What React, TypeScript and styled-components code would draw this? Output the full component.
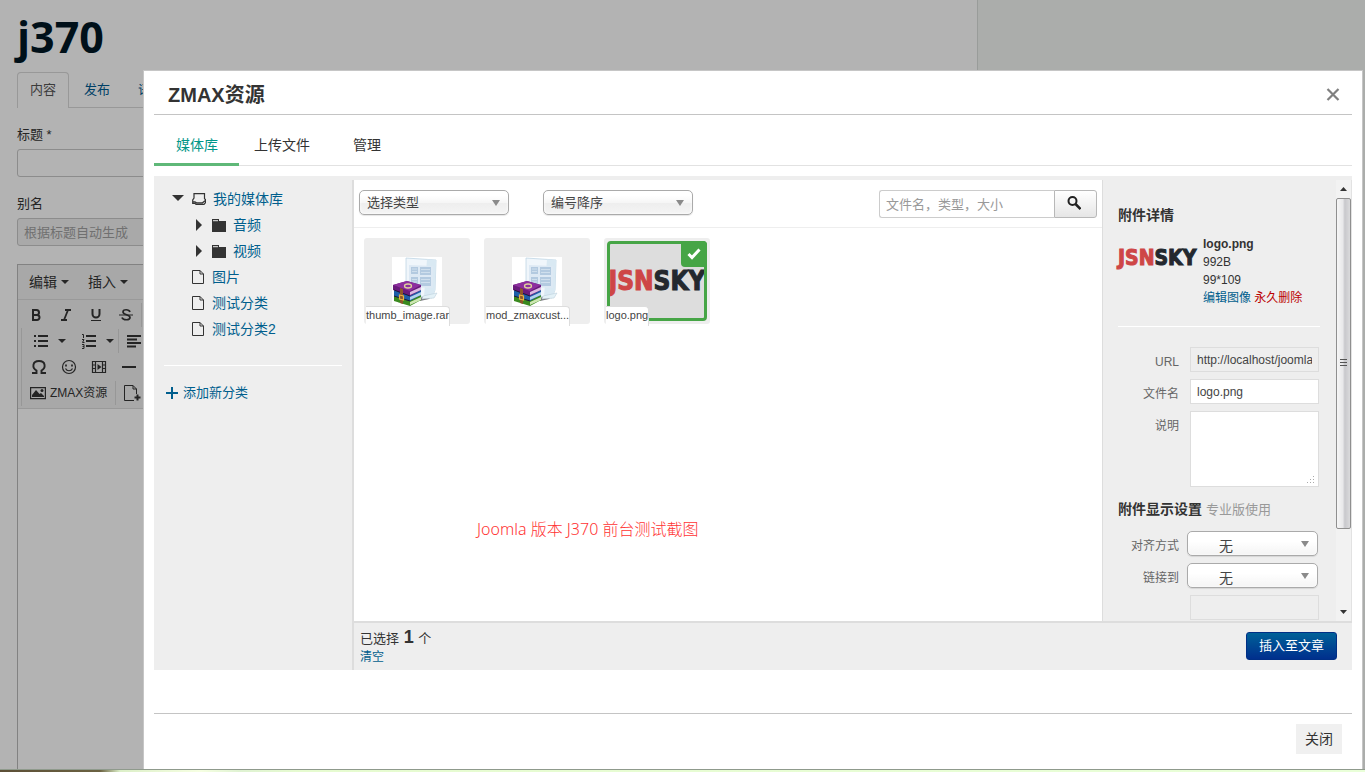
import React from "react";
import styled, { createGlobalStyle, css } from "styled-components";

const GlobalStyle = createGlobalStyle`
  * { box-sizing: border-box; }
  html, body { margin: 0; padding: 0; }
  body {
    font-family: "Liberation Sans", "Noto Sans CJK SC", sans-serif;
    font-size: 13px;
    line-height: 18px;
    color: #333;
    overflow: hidden;
  }
  button, input, select, textarea { font: inherit; color: inherit; margin: 0; }
  button { cursor: pointer; }
  a { text-decoration: none; }
  svg { display: block; flex: none; }
`;

/* ---------- dimmed page behind the dialog ---------- */

const Page = styled.div`
  display: flex;
  height: 100vh;
  background: #abadab;
`;
const Article = styled.main`
  flex: 1;
  display: flex;
  flex-direction: column;
  padding: 12px 20px 0 17px;
  background: #b3b3b3;
  border-right: 1px solid #999c9a;
  color: #242424;
`;
const Margin = styled.aside`
  width: 387px;
`;
const SiteTitle = styled.h1`
  margin: 0 0 10px;
  font: 700 43px/50px "Open Sans", sans-serif;
  color: #001019;
`;
const PageTabs = styled.nav`
  display: flex;
  gap: 2px;
  height: 36px;
  border-bottom: 1px solid #989898;
`;
const PageTab = styled.a<{ $active?: boolean }>`
  height: 36px;
  padding: 0 13px;
  line-height: 36px;
  color: #004066;
  ${(p) =>
    p.$active &&
    css`
      padding: 0 12px;
      line-height: 34px;
      color: #3b3b3b;
      background: #b3b3b3;
      border: 1px solid #989898;
      border-bottom: 0;
      border-radius: 4px 4px 0 0;
    `}
`;
const PageLabel = styled.label`
  margin-top: 18px;
  margin-bottom: 5px;
`;
const PageInput = styled.input`
  height: 28px;
  padding: 0 6px;
  background: #b3b3b3;
  border: 1px solid #8c8c8c;
  border-radius: 3px;
  &::placeholder { color: #707070; opacity: 1; }
  &:read-only { background: #a9a9a9; }
`;
const Editor = styled.section`
  flex: 1;
  margin-top: 18px;
  border: 1px solid #828282;
  border-bottom: 0;
`;
const EditorMenu = styled.div`
  display: flex;
  gap: 19px;
  height: 35px;
  padding: 0 11px;
  background: #a8a8a8;
  border-bottom: 1px solid #999;
`;
const MenuButton = styled.button`
  display: flex;
  align-items: center;
  gap: 4px;
  padding: 0;
  border: 0;
  background: none;
  font-size: 14px;
`;
const EditorTools = styled.div`
  height: 109px;
  padding: 2px 3px;
  background: #a8a8a8;
  border-bottom: 1px solid #999;
`;
const ToolRow = styled.div<{ $ruled?: boolean; $inset?: number }>`
  display: flex;
  align-items: center;
  height: 26px;
  padding-left: ${(p) => p.$inset ?? 0}px;
  border-left: ${(p) => (p.$ruled ? "1px solid #979797" : "0")};
`;
const ToolButton = styled.button<{ $wide?: boolean }>`
  display: flex;
  align-items: center;
  justify-content: center;
  gap: 4px;
  flex: none;
  width: ${(p) => (p.$wide ? "auto" : "30px")};
  height: 24px;
  padding: ${(p) => (p.$wide ? "0 8px" : "0 2px")};
  border: 0;
  background: none;
  font-size: 12px;
  white-space: nowrap;
`;
const ListButton = styled(ToolButton)`
  width: 48px;
  gap: 10px;
  justify-content: flex-start;
  padding: 0 0 0 12px;
`;
const ToolRule = styled.span`
  flex: none;
  width: 1px;
  height: 24px;
  background: #979797;
`;
const Caret = styled.span`
  border: 4px solid transparent;
  border-top-color: #262626;
  border-bottom: 0;
`;
const DesktopEdge = styled.div`
  position: fixed;
  left: 0;
  right: 0;
  bottom: 0;
  height: 3px;
  z-index: 3;
  border-top: 1px solid #8f9a8c;
  background: linear-gradient(90deg, #5c4f36 0, #6b6242 100px, #dcefc8 120px, #f6ffe2 200px, #dff2d2 240px, #e6fbd0 300px, #e9ffd8);
`;

/* ---------- dialog ---------- */

const Dialog = styled.section`
  position: fixed;
  z-index: 2;
  inset: 70px 2px 3px 143px;
  display: flex;
  flex-direction: column;
  padding: 0 10px;
  background: #fff;
  border: 1px solid #c6c6c6;
  border-bottom: 0;
`;
const DialogHead = styled.header`
  display: flex;
  justify-content: space-between;
  align-items: center;
  height: 44px;
  padding: 4px 12px 0 14px;
  border-bottom: 1px solid #c4c4c4;
`;
const DialogTitle = styled.h2`
  margin: 0;
  font-size: 20px;
  line-height: 28px;
`;
const CloseIcon = styled.button`
  padding: 0;
  border: 0;
  background: none;
  color: #808080;
`;
const Tabs = styled.nav`
  display: flex;
  height: 51px;
  border-bottom: 1px solid #e2e2e2;
`;
const Tab = styled.a<{ $active?: boolean }>`
  height: 51px;
  padding: 8px 28px 0 15px;
  font-size: 14px;
  line-height: 44px;
  color: #333;
  ${(p) =>
    p.$active &&
    css`
      padding: 8px 21px 0 22px;
      color: #009688;
      border-bottom: 3px solid #5fb878;
    `}
`;
const Library = styled.div`
  flex: 1;
  min-height: 0;
  display: flex;
  margin: 10px 0 43px;
  padding-top: 4px;
  background: #eee;
`;
const Sidebar = styled.aside`
  width: 198px;
  padding: 6px 10px;
`;
const Tree = styled.ul`
  margin: 0;
  padding: 0 0 23px;
  list-style: none;
  border-bottom: 1px solid #fff;
`;
const TreeRow = styled.li<{ $indent: number }>`
  display: flex;
  align-items: center;
  height: 26px;
  padding-left: ${(p) => p.$indent}px;
  gap: 7px;
  color: #333;
  font-size: 14px;
`;
const BlueLink = styled.a`
  color: #005e8d;
`;
const AddLink = styled(BlueLink)`
  display: flex;
  align-items: center;
  gap: 5px;
  margin: 18px 0 0 2px;
`;
const Content = styled.div`
  flex: 1;
  min-width: 0;
  display: flex;
  flex-direction: column;
  border-left: 2px solid #ddd;
`;
const Workspace = styled.div`
  flex: 1;
  min-height: 0;
  display: flex;
`;
const Browser = styled.div`
  flex: 1;
  min-width: 0;
  display: flex;
  flex-direction: column;
  background: #fff;
`;
const Toolbar = styled.div`
  display: flex;
  align-items: flex-start;
  gap: 34px;
  height: 48px;
  padding: 10px 5px;
  border-bottom: 1px solid #eee;
`;
const SelectBox = styled.span<{ $width: number }>`
  position: relative;
  flex: none;
  width: ${(p) => p.$width}px;
  color: #8a8a8a;
  svg { position: absolute; right: 9px; top: 10px; }
`;
const Select = styled.select<{ $inset?: number }>`
  appearance: none;
  display: block;
  width: 100%;
  height: 25px;
  padding: 0 20px 0 ${(p) => p.$inset ?? 7}px;
  color: #444;
  border: 1px solid #aaa;
  border-radius: 5px;
  background: linear-gradient(#fff 20%, #f6f6f6 50%, #eee 52%, #f4f4f4 100%);
  box-shadow: 0 0 3px #fff inset, 0 1px 1px rgba(0, 0, 0, 0.1);
`;
const PlainSelect = styled(Select)`
  padding-top: 5px;
  font-size: 14px;
  background: linear-gradient(#fff, #fff 40%, #f4f4f4);
`;
const Search = styled.form`
  display: flex;
  margin-left: auto;
`;
const SearchInput = styled.input`
  width: 175px;
  height: 28px;
  padding: 0 6px;
  border: 1px solid #ccc;
  border-right: 0;
  border-radius: 3px 0 0 3px;
  &::placeholder { color: #999; opacity: 1; }
`;
const SearchButton = styled.button`
  display: flex;
  align-items: center;
  justify-content: center;
  width: 43px;
  height: 28px;
  padding: 0 3px 2px 0;
  border: 1px solid #b8b8b8;
  border-radius: 0 3px 3px 0;
  background: linear-gradient(#fff, #e6e6e6);
`;
const Grid = styled.div`
  display: flex;
  flex-wrap: wrap;
  gap: 14px;
  padding: 10px;
`;
const Thumb = styled.button<{ $selected?: boolean }>`
  position: relative;
  display: flex;
  justify-content: center;
  width: 106px;
  height: 86px;
  padding: ${(p) => (p.$selected ? "3px" : "19px 0 0")};
  border: 0;
  border-radius: 3px;
  background: #eee;
`;
const Chosen = styled.span`
  display: flex;
  align-items: center;
  justify-content: center;
  width: 100px;
  height: 80px;
  overflow: hidden;
  border: 3px solid #46a546;
  border-radius: 4px;
  background: #ddd;
`;
const Tick = styled.span`
  position: absolute;
  top: 3px;
  right: 3px;
  display: flex;
  align-items: center;
  justify-content: center;
  width: 26px;
  height: 26px;
  border-radius: 0 4px 0 4px;
  background: #46a546;
`;
const FileName = styled.span`
  position: absolute;
  left: 2px;
  bottom: -2px;
  height: 20px;
  white-space: nowrap;
  font-size: 11px;
  line-height: 16px;
  color: #444;
  background: #fff;
  border: 1px solid #ddd;
  border-width: 1px 1px 0 0;
  border-radius: 0 4px 0 0;
`;
const Wordmark = styled.span<{ $size: number }>`
  font: 700 ${(p) => p.$size}px/36px "DejaVu Sans Condensed", "DejaVu Sans", sans-serif;
  color: #23282e;
  white-space: nowrap;
  -webkit-text-stroke: 1px currentColor;
  b { color: #ce4646; }
`;
const Note = styled.p`
  margin: auto 0 80px 123px;
  font: 16px/24px "Noto Sans", "Noto Sans CJK SC", sans-serif;
  font-weight: 300;
  color: #f33;
`;

/* ---------- attachment details ---------- */

const Details = styled.aside`
  display: flex;
  width: 250px;
  border-left: 1px solid #ddd;
`;
const DetailsBody = styled.div`
  flex: 1;
  min-width: 0;
  height: 100%;
  overflow: hidden;
  padding: 25px 16px 0 15px;
`;
const DetailsTitle = styled.h3`
  margin: 0;
  font-size: 14px;
  line-height: 20px;
  small { font-size: 13px; font-weight: 400; color: #999; }
`;
const FileInfo = styled.div`
  display: flex;
  gap: 6px;
  height: 102px;
  padding-top: 10px;
  margin-bottom: 20px;
  border-bottom: 1px solid #fff;
  font-size: 12px;
`;
const LogoCell = styled.div`
  flex: none;
  width: 79px;
  padding-top: 5px;
`;
const InfoLines = styled.div`
  display: flex;
  flex-direction: column;
  white-space: nowrap;
`;
const RedLink = styled.a`
  color: #b00;
`;
const Field = styled.div<{ $gap?: number }>`
  display: flex;
  gap: ${(p) => p.$gap ?? 11}px;
  margin-bottom: 7px;
`;
const FieldLabel = styled.label`
  width: 61px;
  padding-top: 6px;
  text-align: right;
  font-size: 12px;
  color: #666;
`;
const fieldBox = css`
  width: 129px;
  padding: 0 6px;
  font-size: 12px;
  color: #444;
  border: 1px solid #ddd;
  border-radius: 0;
  background: #fff;
`;
const FieldInput = styled.input`
  ${fieldBox}
  height: 25px;
  &:read-only { background: #eee; }
`;
const AreaBox = styled.span`
  position: relative;
  svg { position: absolute; right: 4px; bottom: 3px; }
`;
const FieldArea = styled.textarea`
  ${fieldBox}
  display: block;
  height: 76px;
  resize: none;
`;
const DisplayTitle = styled(DetailsTitle)`
  padding: 5px 0 11px;
`;
const Scrollbar = styled.div`
  display: flex;
  flex-direction: column;
  align-items: center;
  width: 16px;
  color: #333;
  background: #f2f2f2;
  border-right: 1px solid #e2e2e2;
`;
const ScrollArrow = styled.span`
  display: flex;
  align-items: center;
  justify-content: center;
  height: 18px;
`;
const ScrollThumb = styled.div`
  display: flex;
  align-items: center;
  justify-content: center;
  width: 15px;
  height: 75%;
  border: 1px solid #8f8f8f;
  border-radius: 2px;
  background: linear-gradient(90deg, #f6f6f6, #e8e8ea 45%, #c8c8cc 60%, #dadadc);
`;
const ScrollEnd = styled(ScrollArrow)`
  margin-top: auto;
`;
const StatusBar = styled.footer`
  display: flex;
  justify-content: space-between;
  align-items: flex-start;
  height: 49px;
  padding: 5px 15px 0 6px;
  border-top: 2px solid #ddd;
`;
const Selection = styled.div`
  line-height: 19px;
  strong { font-size: 18px; margin: 0 1px; }
  a { display: block; font-size: 12px; }
`;
const InsertButton = styled.button`
  height: 28px;
  margin-top: 4px;
  padding: 0 12px;
  color: #fff;
  border: 1px solid #002f86;
  border-radius: 3px;
  background: linear-gradient(#006198, #002f8d);
`;
const DialogFoot = styled.footer`
  display: flex;
  justify-content: flex-end;
  height: 56px;
  padding: 10px;
  border-top: 1px solid #c4c4c4;
`;
const CloseButton = styled.button`
  width: 46px;
  height: 30px;
  padding: 0;
  border: 0;
  background: #f0f0f0;
  font-size: 14px;
`;

/* ---------- drawings ---------- */

const Triangle = ({ dir }: { dir: "down" | "right" }) =>
  dir === "down" ? (
    <svg width="13" height="8" fill="currentColor"><path d="M0 0h12L6 6z" /></svg>
  ) : (
    <svg width="10" height="12" fill="currentColor"><path d="M2 0l6 6-6 6z" /></svg>
  );
const SelectArrow = () => (
  <svg width="8" height="6" fill="currentColor"><path d="M0 0h8L4 6z" /></svg>
);
const TrayIcon = () => (
  <svg width="14" height="13" fill="none" stroke="currentColor" strokeWidth="1.2">
    <path d="M2 .7h10.500v5l1 1v3l-1.500 1.600H4L3 10.300H.7V7L2 5zM.7 8.800H3l1.500 1h6l2.500-2" />
  </svg>
);
const FolderIcon = () => (
  <svg width="15" height="13" fill="currentColor">
    <path d="M1 0h7v2h7v11H1z" /><path d="M2 1.200h5v1H2z" fill="#eee" />
  </svg>
);
const PageIcon = () => (
  <svg width="13" height="14" fill="none" stroke="currentColor">
    <path d="M.5.5h7.500l3.500 3.500v9.500H.5zM8 .5V4h3.500" />
  </svg>
);
const ArchiveIcon = () => (
  <svg width="50" height="50" viewBox="0 0 50 50">
    <path d="M0 0h50v50H0z" fill="#fff" />
    <path d="M27 41l15-4-5 5-9 2z" fill="#77777c" />
    <path d="M14 1l30 2-1 30-3 8-26-4z" fill="#f0f6fb" stroke="#bfd5e4" strokeWidth=".8" />
    <path d="M35 2.500l9 .8-1 30-3 7-8-1z" fill="#d9e9f3" />
    <path d="M17 8l24 1v22l-24-1z" fill="#dde9f4" />
    <path d="M19 10h7v7h-7zM28 10h11v8H28zM19 20h7v7h-7zM28 20h11v9H28z" fill="#b3cae0" />
    <path d="M20 12h5M20 14.500h5M29 12.500h9M29 15.500h9M20 22.500h5M20 25h5M29 22.500h9M29 25.500h9" stroke="#cfdfed" />
    <path d="M31 39l14-3-3 5-12 1z" fill="#e3f1f7" stroke="#b7cbd7" strokeWidth=".5" />
    <path d="M2 39l15-4 12 3v5l-11 6L2 44z" fill="#3a8a1f" />
    <path d="M18 45l11-5v3l-11 5z" fill="#cde7b2" />
    <path d="M2 34l15-4 12 3v5l-11 6L2 39z" fill="#1d5fa8" />
    <path d="M18 40l11-5v3l-11 5z" fill="#b4d3ec" />
    <path d="M1 28l14-4 14 4v5l-11 6-17-6z" fill="#6a1a7c" />
    <path d="M1 28l14-4 14 4-11 6z" fill="#8d2f9e" />
    <path d="M18 35l11-5v3l-11 5z" fill="#dcb9e0" />
    <path d="M2 33l16 6M2 39l16 5" stroke="#1b1638" />
    <path d="M8 31l3 1v15l-3-1z" fill="#8d552b" />
    <path d="M7.500 38l4 1v4l-4-1z" fill="none" stroke="#e9b43d" strokeWidth="1.200" />
    <ellipse cx="16" cy="29" rx="3.500" ry="2" fill="none" stroke="#dfd49b" strokeWidth="1.300" />
  </svg>
);
const Glyph = ({ children, w = 16 }: { children: React.ReactNode; w?: number }) => (
  <svg width={w} height="16" viewBox={`0 0 ${w} 16`} fill="none" stroke="#242424" strokeWidth="2">{children}</svg>
);
const BoldGlyph = () => <Glyph><path d="M5 2.500v11M4 3h4.500a2 2 0 010 5H5h4a2.500 2.500 0 010 5H4" /></Glyph>;
const ItalicGlyph = () => <Glyph><path d="M7 3h6M3 13h6M10 3L6 13" strokeWidth="1.800" /></Glyph>;
const UnderlineGlyph = () => <Glyph><path d="M4.500 2v5a3.500 3.500 0 007 0V2" /><path d="M3 13.500h10" strokeWidth="1" /></Glyph>;
const StrikeGlyph = () => (
  <Glyph><path d="M12 5C11 2 5 2 5 5c0 3 7 2.500 7 5.500s-7 3-8 0" strokeWidth="1.700" /><path d="M1 8h14" strokeWidth="1" /></Glyph>
);
const BulletGlyph = () => (
  <Glyph w={14}><path d="M4 3h10M4 8h10M4 13h10M0 3h2M0 8h2M0 13h2" /></Glyph>
);
const NumberGlyph = () => (
  <Glyph w={14}>
    <path d="M4 3h10M4 8h10M4 13h10" />
    <path d="M0 1.500h1.500V5M0 6.500h2L.5 9.500h2M0 11.500h2v4H0M.5 13.500h1.500" strokeWidth="1" />
  </Glyph>
);
const AlignGlyph = () => <Glyph><path d="M1 3h14M1 6.500h10M1 10h14M1 13.500h9" /></Glyph>;
const OmegaGlyph = () => (
  <Glyph><path d="M1 14h4.500v-2.500C1 9 1 2 8 2s7 7 2.500 9.500V14H15" strokeWidth="1.900" /></Glyph>
);
const SmileGlyph = () => (
  <Glyph>
    <circle cx="8" cy="8" r="6.500" strokeWidth="1.200" />
    <path d="M5 5.500v2M11 5.500v2" strokeWidth="1.700" />
    <path d="M4.500 9.500c1.500 3 5.500 3 7 0" strokeWidth="1.200" />
  </Glyph>
);
const FilmGlyph = () => (
  <Glyph>
    <path d="M1.500 2.500h13v11h-13zM4.500 2.500v11M11.500 2.500v11M1.500 6h3M1.500 9.500h3M11.500 6h3M11.500 9.500h3" strokeWidth="1.200" />
    <path d="M6.500 5l4 3-4 3z" fill="#242424" stroke="none" />
  </Glyph>
);
const RuleGlyph = () => <Glyph><path d="M1 8h14" /></Glyph>;
const PictureGlyph = () => (
  <Glyph>
    <path d="M.6 2.600h14.800v11H.6z" strokeWidth="1.200" />
    <path d="M2 12V10l4-5 3.500 4L11 8l3 3v1z" fill="#242424" stroke="none" /><circle cx="12" cy="5.500" r="1.500" fill="#242424" stroke="none" />
  </Glyph>
);
const NewPageGlyph = () => (
  <svg width="17" height="18" fill="none" stroke="#242424">
    <path d="M10 16.500H.5V1.500H9l3.500 3.500v5M9 1.500V5h3.500" /><path d="M13.500 10.500v6M10.500 13.500h6" strokeWidth="2" />
  </svg>
);

const tree = [
  { name: "我的媒体库", kind: "root" },
  { name: "音频", kind: "folder" },
  { name: "视频", kind: "folder" },
  { name: "图片", kind: "page" },
  { name: "测试分类", kind: "page" },
  { name: "测试分类2", kind: "page" },
];
const indents: Record<string, number> = { root: 8, folder: 30, page: 28 };

export default function App() {
  return (
    <>
      <GlobalStyle />
      <Page>
        <Article>
          <SiteTitle>j370</SiteTitle>
          <PageTabs>
            <PageTab href="#content" $active>内容</PageTab>
            <PageTab href="#publish">发布</PageTab>
            <PageTab href="#language">语言</PageTab>
          </PageTabs>
          <PageLabel htmlFor="title">标题 *</PageLabel>
          <PageInput id="title" />
          <PageLabel htmlFor="alias">别名</PageLabel>
          <PageInput id="alias" placeholder="根据标题自动生成" readOnly />
          <Editor>
            <EditorMenu>
              <MenuButton>编辑<Caret /></MenuButton>
              <MenuButton>插入<Caret /></MenuButton>
            </EditorMenu>
            <EditorTools>
              <ToolRow>
                <ToolButton aria-label="粗体"><BoldGlyph /></ToolButton>
                <ToolButton aria-label="斜体"><ItalicGlyph /></ToolButton>
                <ToolButton aria-label="下划线"><UnderlineGlyph /></ToolButton>
                <ToolButton aria-label="删除线"><StrikeGlyph /></ToolButton>
                <ToolRule />
              </ToolRow>
              <ToolRow $ruled>
                <ListButton aria-label="项目列表"><BulletGlyph /><Caret /></ListButton>
                <ListButton aria-label="编号列表"><NumberGlyph /><Caret /></ListButton>
                <ToolRule />
                <ToolButton aria-label="左对齐"><AlignGlyph /></ToolButton>
              </ToolRow>
              <ToolRow $ruled $inset={2}>
                <ToolButton aria-label="特殊字符"><OmegaGlyph /></ToolButton>
                <ToolButton aria-label="表情"><SmileGlyph /></ToolButton>
                <ToolButton aria-label="视频"><FilmGlyph /></ToolButton>
                <ToolButton aria-label="水平线"><RuleGlyph /></ToolButton>
              </ToolRow>
              <ToolRow $ruled>
                <ToolButton $wide><PictureGlyph />ZMAX资源</ToolButton>
                <ToolRule />
                <ToolButton $wide aria-label="新页面"><NewPageGlyph /></ToolButton>
              </ToolRow>
            </EditorTools>
          </Editor>
        </Article>
        <Margin />
      </Page>

      <Dialog role="dialog" aria-labelledby="dialog-title">
        <DialogHead>
          <DialogTitle id="dialog-title">ZMAX资源</DialogTitle>
          <CloseIcon aria-label="关闭窗口">
            <svg width="14" height="14" fill="none" stroke="currentColor" strokeWidth="2.200"><path d="M1.500 1l11 11M12.500 1l-11 11" /></svg>
          </CloseIcon>
        </DialogHead>
        <Tabs>
          <Tab href="#library" $active>媒体库</Tab>
          <Tab href="#upload">上传文件</Tab>
          <Tab href="#manage">管理</Tab>
        </Tabs>

        <Library>
          <Sidebar>
            <Tree>
              {tree.map((n) => (
                <TreeRow key={n.name} $indent={indents[n.kind]}>
                  {n.kind === "root" && <><Triangle dir="down" /><TrayIcon /></>}
                  {n.kind === "folder" && <><Triangle dir="right" /><FolderIcon /></>}
                  {n.kind === "page" && <PageIcon />}
                  <BlueLink href="#category">{n.name}</BlueLink>
                </TreeRow>
              ))}
            </Tree>
            <AddLink href="#add">
              <svg width="12" height="12" fill="none" stroke="currentColor" strokeWidth="2"><path d="M6 0v12M0 6h12" /></svg>
              添加新分类
            </AddLink>
          </Sidebar>

          <Content>
            <Workspace>
              <Browser>
                <Toolbar>
                  <SelectBox $width={150}>
                    <Select aria-label="类型"><option>选择类型</option></Select>
                    <SelectArrow />
                  </SelectBox>
                  <SelectBox $width={150}>
                    <Select aria-label="排序"><option>编号降序</option></Select>
                    <SelectArrow />
                  </SelectBox>
                  <Search onSubmit={(e) => e.preventDefault()}>
                    <SearchInput aria-label="搜索" placeholder="文件名，类型，大小" />
                    <SearchButton aria-label="搜索">
                      <svg width="14" height="14" fill="none" stroke="#222" strokeWidth="2"><circle cx="5.500" cy="5" r="4" /><path d="M8.500 8l5 5" strokeWidth="2.500" /></svg>
                    </SearchButton>
                  </Search>
                </Toolbar>
                <Grid>
                  <Thumb><ArchiveIcon /><FileName>thumb_image.rar</FileName></Thumb>
                  <Thumb><ArchiveIcon /><FileName>mod_zmaxcust...</FileName></Thumb>
                  <Thumb $selected>
                    <Chosen><Wordmark $size={26}><b>JSN</b>SKY</Wordmark></Chosen>
                    <Tick>
                      <svg width="14" height="12" fill="none" stroke="#fff" strokeWidth="3"><path d="M1.500 6l3.500 3.500 7.500-8" /></svg>
                    </Tick>
                    <FileName>logo.png</FileName>
                  </Thumb>
                </Grid>
                <Note>Joomla 版本 J370 前台测试截图</Note>
              </Browser>

              <Details>
                <DetailsBody>
                  <DetailsTitle>附件详情</DetailsTitle>
                  <FileInfo>
                    <LogoCell><Wordmark $size={21}><b>JSN</b>SKY</Wordmark></LogoCell>
                    <InfoLines>
                      <strong>logo.png</strong>
                      <span>992B</span>
                      <span>99*109</span>
                      <span><BlueLink href="#edit">编辑图像</BlueLink> <RedLink href="#delete">永久删除</RedLink></span>
                    </InfoLines>
                  </FileInfo>
                  <Field>
                    <FieldLabel htmlFor="url">URL</FieldLabel>
                    <FieldInput id="url" readOnly value="http://localhost/joomla/j370/logo.png" />
                  </Field>
                  <Field>
                    <FieldLabel htmlFor="filename">文件名</FieldLabel>
                    <FieldInput id="filename" defaultValue="logo.png" />
                  </Field>
                  <Field>
                    <FieldLabel htmlFor="description">说明</FieldLabel>
                    <AreaBox>
                      <FieldArea id="description" />
                      <svg width="8" height="8" fill="#aaa">
                        <path d="M6 0h1v1H6zM6 3h1v1H6zM3 3h1v1H3zM6 6h1v1H6zM3 6h1v1H3zM0 6h1v1H0z" />
                      </svg>
                    </AreaBox>
                  </Field>
                  <DisplayTitle>附件显示设置 <small>专业版使用</small></DisplayTitle>
                  <Field $gap={8}>
                    <FieldLabel htmlFor="align">对齐方式</FieldLabel>
                    <SelectBox $width={131}>
                      <PlainSelect id="align" $inset={31}><option>无</option></PlainSelect>
                      <SelectArrow />
                    </SelectBox>
                  </Field>
                  <Field $gap={8}>
                    <FieldLabel htmlFor="link">链接到</FieldLabel>
                    <SelectBox $width={131}>
                      <PlainSelect id="link" $inset={31}><option>无</option></PlainSelect>
                      <SelectArrow />
                    </SelectBox>
                  </Field>
                  <Field>
                    <FieldLabel as="span" />
                    <FieldInput aria-label="链接地址" readOnly />
                  </Field>
                </DetailsBody>
                <Scrollbar aria-hidden="true">
                  <ScrollArrow><svg width="7" height="4" fill="currentColor"><path d="M0 4h7L3.500 0z" /></svg></ScrollArrow>
                  <ScrollThumb>
                    <svg width="7" height="8" stroke="#555"><path d="M0 .5h7M0 3.500h7M0 6.500h7" /></svg>
                  </ScrollThumb>
                  <ScrollEnd><svg width="7" height="4" fill="currentColor"><path d="M0 0h7L3.500 4z" /></svg></ScrollEnd>
                </Scrollbar>
              </Details>
            </Workspace>

            <StatusBar>
              <Selection>
                已选择 <strong>1</strong> 个
                <BlueLink href="#clear">清空</BlueLink>
              </Selection>
              <InsertButton>插入至文章</InsertButton>
            </StatusBar>
          </Content>
        </Library>

        <DialogFoot>
          <CloseButton>关闭</CloseButton>
        </DialogFoot>
      </Dialog>
      <DesktopEdge />
    </>
  );
}
